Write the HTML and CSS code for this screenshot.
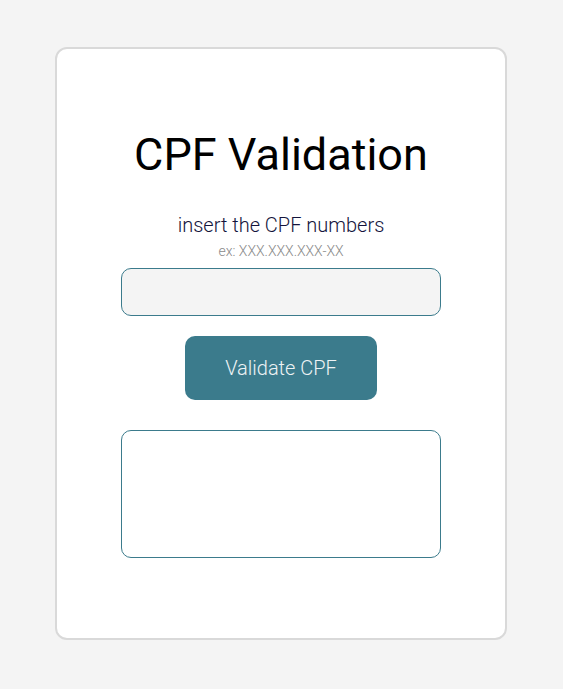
FILE: index.html
```html
<!DOCTYPE html>
<html lang="en">
<head>
<meta charset="utf-8">
<title>CPF Validation</title>
<link rel="stylesheet" href="styles.css">
</head>
<body>
<main class="card">
  <h1 class="title">CPF Validation</h1>
  <p class="label">insert the CPF numbers</p>
  <p class="hint">ex: XXX.XXX.XXX-XX</p>
  <input class="field" type="text" aria-label="CPF">
  <button class="btn" type="button">Validate CPF</button>
  <div class="result"></div>
</main>
</body>
</html>
```

FILE: styles.css
```css
html, body {
  margin: 0;
  padding: 0;
  background: #f4f4f4;
  font-family: Roboto, "Liberation Sans", sans-serif;
}
body {
  padding: 47px 1px 0 0;
  display: flex;
  justify-content: center;
}
.card {
  box-sizing: border-box;
  width: 452px;
  height: 593px;
  background: #fff;
  border: 2px solid #d9d9d9;
  border-radius: 12px;
  display: flex;
  flex-direction: column;
  align-items: center;
  padding-top: 80px;
}
.title {
  margin: 0;
  font-size: 45px;
  font-weight: 400;
  line-height: 52px;
  color: #000;
}
.label {
  margin: 32px 0 0;
  font-size: 20px;
  font-weight: 300;
  line-height: 24px;
  color: #14143c;
}
.hint {
  margin: 5px 0 0;
  font-size: 14px;
  font-weight: 300;
  line-height: 18px;
  color: #8a8a8a;
}
.field {
  box-sizing: border-box;
  margin-top: 8px;
  width: 320px;
  height: 48px;
  background: #f4f4f4;
  border: 1px solid #3b7b8c;
  border-radius: 10px;
  outline: none;
}
.btn {
  margin-top: 20px;
  width: 192px;
  height: 64px;
  background: #3b7b8c;
  color: #eef3f5;
  border: none;
  border-radius: 10px;
  font-family: Roboto, "Liberation Sans", sans-serif;
  font-size: 20px;
  font-weight: 300;
}
.result {
  box-sizing: border-box;
  margin-top: 30px;
  width: 320px;
  height: 128px;
  border: 1px solid #3b7b8c;
  border-radius: 10px;
}
```
